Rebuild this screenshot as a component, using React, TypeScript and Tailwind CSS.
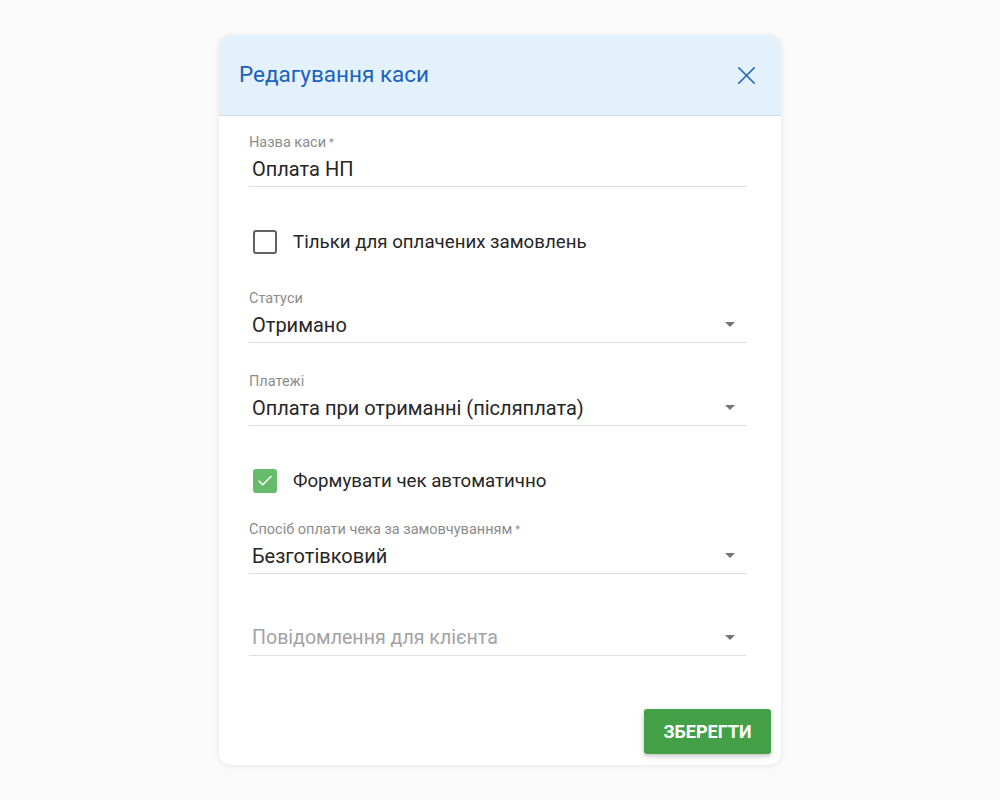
import { X, Check } from 'lucide-react'

const Arrow = () => (
  <svg width="10" height="5" viewBox="0 0 10 5" className="shrink-0">
    <path d="M0 0 L10 0 L5 5 Z" fill="#757575" />
  </svg>
)

type FieldProps = {
  label?: string
  required?: boolean
  value: string
  placeholder?: boolean
  select?: boolean
  className?: string
}

const Field = ({ label, required, value, placeholder, select, className = '' }: FieldProps) => (
  <div className={className}>
    <div className="h-[16px] text-[14.5px] leading-[16px] text-[#8c8c8c]">
      {label}
      {required && <span className="ml-[3px] text-[11px] align-top">*</span>}
    </div>
    <div className="h-[36px] flex items-center justify-between pl-[3px] pr-[11px] border-b border-[#dedede]">
      <span className={placeholder ? 'text-[19.6px] text-[#a3a3a3]' : 'text-[20px] text-[#262626]'}>{value}</span>
      {select && <Arrow />}
    </div>
  </div>
)

const CheckRow = ({ checked, label, className = '' }: { checked?: boolean; label: string; className?: string }) => (
  <div className={`h-[40px] flex items-center pl-[4px] ${className}`}>
    {checked ? (
      <div className="w-[24px] h-[24px] rounded-[3px] bg-[#66bb6a] flex items-center justify-center">
        <Check size={18} strokeWidth={2} color="#fff" />
      </div>
    ) : (
      <div className="w-[24px] h-[24px] rounded-[3px] border-2 border-[#616161]" />
    )}
    <span className="ml-[16px] text-[18.7px] text-[#262626]">{label}</span>
  </div>
)

export default function App() {
  return (
    <div className="min-h-screen bg-[#fafafa] flex items-center justify-center" style={{ fontFamily: 'Roboto, "Noto Sans", sans-serif' }}>
      <div className="w-[562px] bg-white rounded-[12px] shadow-[0_1px_6px_rgba(0,0,0,0.08)] overflow-hidden">
        <div className="h-[81px] bg-[#e3f1fc] border-b border-[#d5dde4] flex items-center justify-between pl-[20px] pr-[19px]">
          <h2 className="text-[22.5px] text-[#1a62c0]">Редагування каси</h2>
          <X size={31} strokeWidth={1.2} color="#1a62c0" />
        </div>

        <div className="pt-[19px] pl-[30px] pr-[35px]">
          <Field label="Назва каси" required value="Оплата НП" />
          <CheckRow label="Тільки для оплачених замовлень" className="mt-[35px]" />
          <Field label="Статуси" value="Отримано" select className="mt-[29px]" />
          <Field label="Платежі" value="Оплата при отриманні (післяплата)" select className="mt-[31px]" />
          <CheckRow checked label="Формувати чек автоматично" className="mt-[35px]" />
          <Field label="Спосіб оплати чека за замовчуванням" required value="Безготівковий" select className="mt-[21px]" />
          <Field value="Повідомлення для клієнта" placeholder select className="mt-[30px]" />
        </div>

        <div className="flex justify-end pr-[10px] pt-[53px] pb-[11px]">
          <button className="w-[127px] h-[45px] rounded-[3px] bg-[#43a047] text-white text-[18px] font-bold shadow-[0_2px_5px_rgba(0,0,0,0.25)]">
            ЗБЕРЕГТИ
          </button>
        </div>
      </div>
    </div>
  )
}
